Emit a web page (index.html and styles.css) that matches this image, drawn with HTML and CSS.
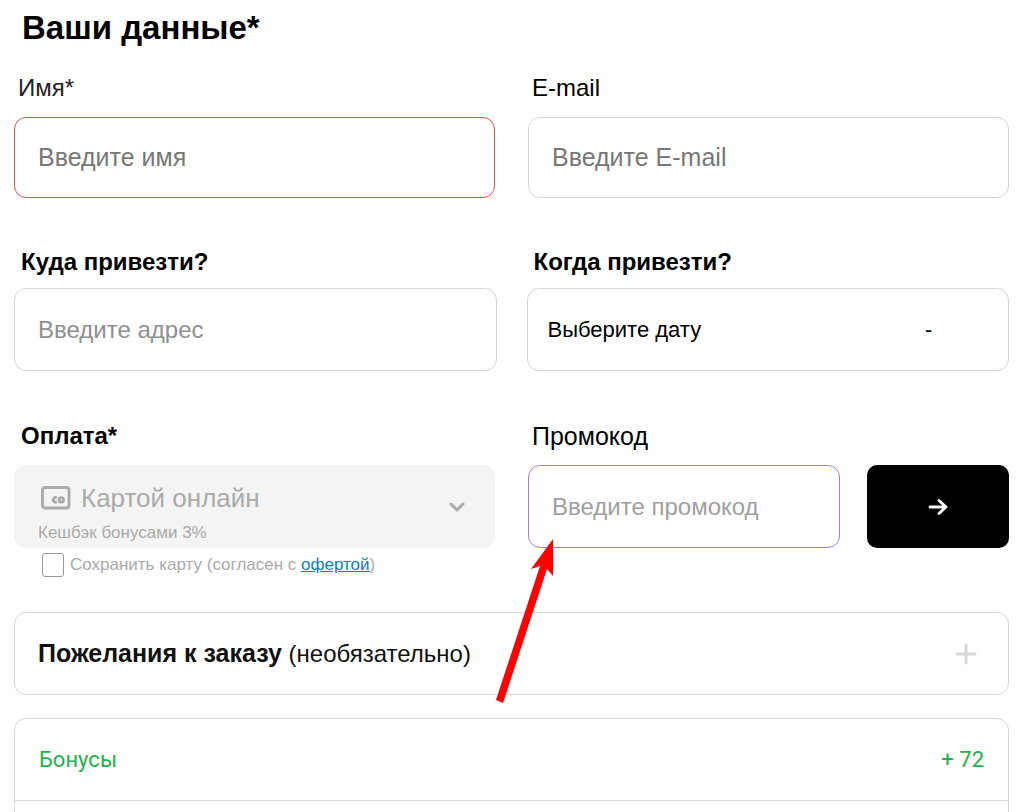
FILE: index.html
```html
<!DOCTYPE html>
<html lang="ru">
<head>
    <meta charset="UTF-8">
    <title>Оформление заказа</title>
    <link rel="stylesheet" href="styles.css">
</head>
<body>
    <form class="checkout">
        <h1 class="title">Ваши данные*</h1>

        <div class="row">
            <div class="field">
                <label class="label label-name" for="userName">Имя*</label>
                <input class="input error" type="text" id="userName" placeholder="Введите имя">
            </div>
            <div class="field">
                <label class="label" for="userEmail">E-mail</label>
                <input class="input" type="email" id="userEmail" placeholder="Введите E-mail">
            </div>
        </div>

        <div class="row row-delivery">
            <div class="field">
                <label class="label bold" for="address">Куда привезти?</label>
                <input class="input tall address" type="text" id="address" placeholder="Введите адрес">
            </div>
            <div class="field">
                <label class="label bold" for="date">Когда привезти?</label>
                <div class="date-box">
                    <select class="select date" id="date">
                        <option>Выберите дату</option>
                    </select>
                    <select class="select time" id="time" aria-label="Время">
                        <option>-</option>
                    </select>
                </div>
            </div>
        </div>

        <div class="row">
            <div class="field">
                <label class="label bold" for="payment">Оплата*</label>
                <div class="payment">
                    <div class="payment-main">
                        <div class="payment-line">
                            <svg class="card-icon" width="30" height="24" viewBox="0 0 30 24" fill="none" stroke="#aaa">
                                <rect x="1.500" y="1.500" width="26.500" height="20.500" rx="2.500" stroke-width="2.800"/>
                                <path d="M15.800 12.200a2.200 2.200 0 1 0 0 3.400" stroke-width="2.800"/>
                                <circle cx="20.300" cy="13.900" r="2.200" stroke-width="2.800"/>
                            </svg>
                            <select class="select pay-select" id="payment" disabled>
                                <option>Картой онлайн</option>
                            </select>
                        </div>
                        <div class="cashback">Кешбэк бонусами 3%</div>
                    </div>
                    <svg width="16" height="10" viewBox="0 0 16 10" fill="none" stroke="#aaa" stroke-width="3" stroke-linecap="round" stroke-linejoin="round">
                        <path d="M2 2l6 6 6-6"/>
                    </svg>
                </div>
                <div class="save-card">
                    <input class="checkbox" type="checkbox" id="saveCard">
                    <label for="saveCard">Сохранить карту (согласен с <a class="link" href="#">офертой</a>)</label>
                </div>
            </div>
            <div class="field">
                <label class="label promo-label" for="promo">Промокод</label>
                <div class="promo">
                    <input class="input tall promo-input" type="text" id="promo" placeholder="Введите промокод">
                    <button class="promo-button" type="button" aria-label="Применить">
                        <svg width="20" height="18" viewBox="0 0 20 18" fill="none" stroke="#fff" stroke-width="2.800" stroke-linecap="round" stroke-linejoin="round">
                            <path d="M2 9h16M11 2.500l7 6.500-7 6.500"/>
                        </svg>
                    </button>
                </div>
            </div>
        </div>

        <button class="wishes" type="button">
            <span><b>Пожелания к заказу</b> (необязательно)</span>
            <svg width="22" height="22" viewBox="0 0 22 22" stroke="#d6d6d6" stroke-width="3" stroke-linecap="round">
                <path d="M2 11h18M11 2v18"/>
            </svg>
        </button>

        <div class="summary">
            <div class="summary-row bonus">
                <span>Бонусы</span>
                <span>+ 72</span>
            </div>
            <div class="summary-row"></div>
        </div>

        <svg class="pointer" width="60" height="166" viewBox="0 0 60 166" fill="#f00">
            <path d="M58 1V38L52 31 8 165 1 162 45 28 36 31z"/>
        </svg>
    </form>
</body>
</html>
```
FILE: styles.css
```css
* {
    box-sizing: border-box;
}

body {
    margin: 0;
    height: 100vh;
    overflow: hidden;
    background-color: #fff;
    color: #000;
    font-family: "Liberation Sans", Arial, sans-serif;
    font-size: 24px;
}

input, select, button {
    font-family: inherit;
    font-size: inherit;
}

.checkout {
    position: relative;
    padding: 8px 10px 0 14px;
}

.title {
    margin: 0 0 20px 8px;
    font-size: 33px;
    line-height: 40px;
}

.row {
    display: grid;
    grid-template-columns: 1fr 1fr;
    column-gap: 33px;
}

.row-delivery {
    column-gap: 30px;
    margin: 48px 0 45px;
}

.field {
    min-width: 0;
}

.label {
    display: block;
    padding: 4px 4px 13px;
    line-height: 32px;
}

.label-name {
    color: #222;
}

.promo-label {
    font-size: 25px;
}

.bold {
    padding-left: 7px;
    font-weight: bold;
}

.row-delivery .label {
    padding: 0 7px 10px;
}

.input {
    display: block;
    width: 100%;
    height: 81px;
    padding: 0 23px;
    border: 1px solid #d6d6d6;
    border-radius: 12px;
    background-color: #fff;
    font-size: 25px;
    outline: none;
}

.input::placeholder {
    color: #777;
}

.tall {
    height: 83px;
    font-size: 24px;
}

.error {
    border-color: #f04848;
}

.address::placeholder {
    color: #8f8f8f;
}

.select {
    appearance: none;
    padding: 0;
    border: none;
    background: none;
    color: inherit;
}

.date-box {
    display: flex;
    align-items: center;
    justify-content: space-between;
    height: 83px;
    padding: 0 75px 0 20px;
    border: 1px solid #d6d6d6;
    border-radius: 12px;
    font-size: 22px;
}

.payment {
    display: flex;
    align-items: center;
    justify-content: space-between;
    height: 83px;
    padding: 0 30px 0 24px;
    border-radius: 12px;
    background-color: #f4f4f4;
    color: #aaa;
}

.payment-main {
    padding-top: 14px;
}

.payment-line {
    display: flex;
    align-items: center;
    gap: 10px;
    padding-left: 3px;
}

.pay-select {
    font-size: 26px;
    opacity: 1;
}

.cashback {
    margin-top: 8px;
    font-size: 17px;
    line-height: 24px;
}

.save-card {
    display: flex;
    align-items: center;
    gap: 6px;
    padding: 5px 0 0 28px;
    color: #aaa;
    font-size: 17px;
}

.checkbox {
    appearance: none;
    width: 22px;
    height: 24px;
    margin: 0;
    border: 1px solid #999;
    border-radius: 3px;
}

.link {
    color: #0a80b8;
}

.promo {
    display: flex;
    gap: 27px;
}

.promo-input {
    flex: 1;
    min-width: 0;
    border-color: #a57cf0;
}

.promo-input::placeholder {
    color: #a0a0a0;
}

.promo-button {
    display: flex;
    align-items: center;
    justify-content: center;
    width: 142px;
    border: none;
    border-radius: 10px;
    background-color: #000;
    cursor: pointer;
}

.wishes {
    display: flex;
    align-items: center;
    justify-content: space-between;
    width: 100%;
    height: 83px;
    margin: 35px 0 23px;
    padding: 0 31px 0 23px;
    border: 1px solid #d6d6d6;
    border-radius: 12px;
    background-color: #fff;
    color: #111;
    cursor: pointer;
}

.wishes b {
    font-size: 25px;
}

.summary {
    border: 1px solid #d6d6d6;
    border-radius: 12px;
}

.summary-row {
    display: flex;
    align-items: center;
    justify-content: space-between;
    height: 82px;
    padding: 0 24px;
    border-bottom: 1px solid #d6d6d6;
}

.bonus {
    color: #22b14c;
    font-family: Roboto, Arial, sans-serif;
    font-size: 22px;
}

/* red arrow over the promo code field */
.pointer {
    position: absolute;
    top: 538px;
    left: 495px;
    pointer-events: none;
}
```
